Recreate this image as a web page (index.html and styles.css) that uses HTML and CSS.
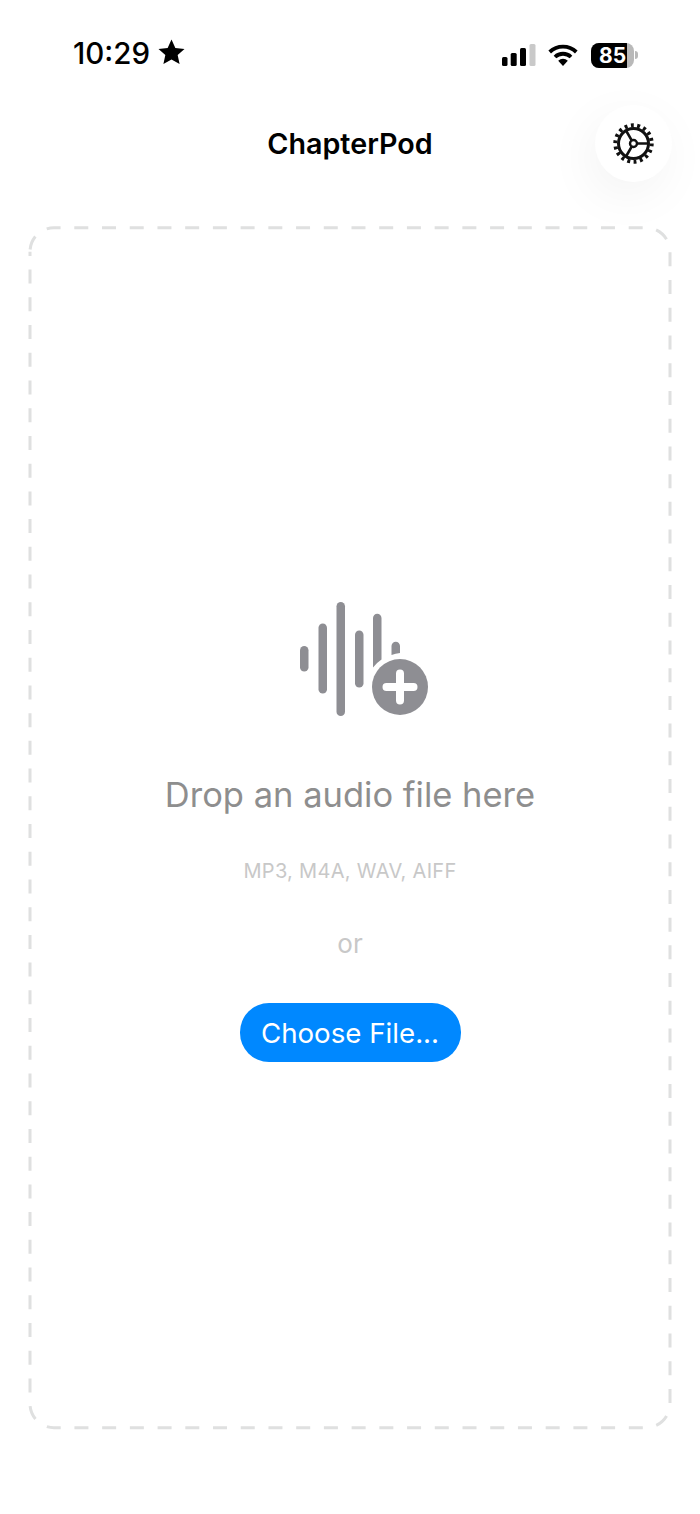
FILE: index.html
```html
<!DOCTYPE html>
<html lang="en">
<head>
<meta charset="utf-8">
<title>ChapterPod</title>
<link rel="stylesheet" href="styles.css">
</head>
<body>
<div class="phone">
  <div class="status">
    <div class="status-left">
      <span class="time">10:29</span>
      <svg class="star" width="27" height="26" viewBox="0 0 28 27"><path d="M14 .5l4 8.800 9.500 1-7.100 6.400 2 9.300L14 21.200l-8.400 4.800 2-9.300L.5 10.300l9.500-1z" fill="#000"/></svg>
    </div>
    <div class="status-right">
      <svg class="signal" width="34" height="22" viewBox="0 0 34 22">
        <rect x="0" y="13" width="5.500" height="9" rx="1.500" fill="#000"/>
        <rect x="8.700" y="9" width="6" height="13" rx="1.500" fill="#000"/>
        <rect x="18" y="4" width="6" height="18" rx="1.500" fill="#000"/>
        <rect x="27.500" y="0" width="6" height="22" rx="1.500" fill="#c9c9c9"/>
      </svg>
      <svg class="wifi" width="30" height="22" viewBox="0 0 30 22">
        <path d="M1.700 8a19.300 19.300 0 0 1 26.600 0" fill="none" stroke="#000" stroke-width="3.800"/>
        <path d="M7 13a11.500 11.500 0 0 1 16 0" fill="none" stroke="#000" stroke-width="3.800"/>
        <path d="M15 22l-4.800-5.300a7 7 0 0 1 9.600 0z" fill="#000"/>
      </svg>
      <div class="battery">
        <div class="battery-body"><span class="battery-fill">85</span></div>
        <span class="battery-cap"></span>
      </div>
    </div>
  </div>

  <header class="header">
    <h1 class="title">ChapterPod</h1>
    <button class="settings" aria-label="Settings">
      <svg width="42" height="42" viewBox="0 0 42 42" fill="none" stroke="#111">
        <circle cx="20.500" cy="20.500" r="18.200" stroke-width="4" stroke-dasharray="2.900 3.453"/>
        <circle cx="20.500" cy="20.500" r="15" stroke-width="3"/>
        <circle cx="20.500" cy="20.500" r="3.500" stroke-width="2.400"/>
        <path d="M24 20.500H35M18.700 17.400L13 7.500M18.700 23.600L13 33.500" stroke-width="2.600"/>
      </svg>
    </button>
  </header>

  <main class="drop">
    <svg class="drop-border" width="644" height="1204" viewBox="0 0 644 1204">
      <path d="M2 25.700a24 24 0 0 1 24-24h592a24 24 0 0 1 24 24v1152a24 24 0 0 1-24 24h-592a24 24 0 0 1-24-24z" fill="none" stroke="#dfe0e0" stroke-width="3" stroke-dasharray="14 13.720" stroke-dashoffset="-2.300"/>
    </svg>
    <svg class="wave" width="156" height="116" viewBox="0 0 156 116">
      <g fill="#8e8e93">
        <rect x="28" y="44" width="8.500" height="25.500" rx="4.250"/>
        <rect x="46.500" y="21.500" width="8.500" height="70" rx="4.250"/>
        <rect x="64.500" y="0" width="8.500" height="114" rx="4.250"/>
        <rect x="83" y="28.500" width="8.500" height="57" rx="4.250"/>
        <path d="M101 16a4.250 4.250 0 0 1 8.500 0v41.500a36 36 0 0 0-8.500 8z"/>
        <path d="M119.500 44a4.250 4.250 0 0 1 8.500 0v7a32 32 0 0 0-8.500 2z"/>
        <circle cx="128" cy="85" r="28"/>
      </g>
      <path d="M128 71.500v27M114.500 85h27" stroke="#fff" stroke-width="8" stroke-linecap="round"/>
    </svg>
    <p class="drop-title">Drop an audio file here</p>
    <p class="formats">MP3, M4A, WAV, AIFF</p>
    <p class="or">or</p>
    <button class="choose">Choose File...</button>
  </main>
</div>
</body>
</html>
```
FILE: styles.css
```css
* { box-sizing: border-box; }
html, body { margin: 0; padding: 0; background: #fff; }
body { font-family: Inter, "Liberation Sans", sans-serif; }
.phone { width: 700px; height: 1514px; display: flex; flex-direction: column; overflow: hidden; }
.status { height: 104px; padding: 33px 62px 0 73px; display: flex; justify-content: space-between; align-items: flex-start; }
.status-left { display: flex; align-items: center; gap: 8px; height: 40px; }
.time { font-size: 29.500px; font-weight: 500; line-height: 42px; color: #000; }
.star { margin-top: -2px; }
.status-right { display: flex; align-items: center; gap: 12px; height: 40px; margin-top: 2px; }
.battery { display: flex; align-items: center; gap: 1px; margin-left: 1px; }
.battery-body { width: 43px; height: 25px; border-radius: 8px; background: #b9b9b9; overflow: hidden; display: flex; }
.battery-fill { width: 36px; background: #000; color: #fff; font-size: 21px; font-weight: 700; line-height: 25px; padding-left: 8px; }
.battery-cap { width: 3px; height: 8px; border-radius: 0 3px 3px 0; background: #b9b9b9; }
.header { height: 78px; display: flex; justify-content: center; align-items: center; position: relative; margin-bottom: 43px; margin-top: 1px; }
.title { margin: -2px 0 0; font-size: 28.700px; font-weight: 600; color: #000; }
.settings { position: absolute; right: 28px; top: 0; width: 77px; height: 77px; border: 0; border-radius: 50%; background: #fff; padding: 0; display: flex; align-items: center; justify-content: center; box-shadow: -6px 14px 50px rgba(0,0,0,.05); }
.drop { position: relative; margin: 0 28px; height: 1204px; display: flex; flex-direction: column; align-items: center; padding-top: 376px; }
.drop-border { position: absolute; left: 0; top: 0; }
.wave { display: block; }
.drop-title { margin: 55px 0 0; font-size: 34.500px; line-height: 44px; color: #8e8e8e; }
.formats { margin: 41px 0 0; font-size: 20px; line-height: 26px; letter-spacing: .3px; color: #c8c8c8; }
.or { margin: 43px 0 0; font-size: 26px; line-height: 34px; color: #c8c8c8; }
.choose { margin-top: 42px; width: 221px; height: 59px; border: 0; border-radius: 29px; background: #0088ff; color: #fff; font-family: inherit; font-size: 27.700px; padding: 0; }
```
